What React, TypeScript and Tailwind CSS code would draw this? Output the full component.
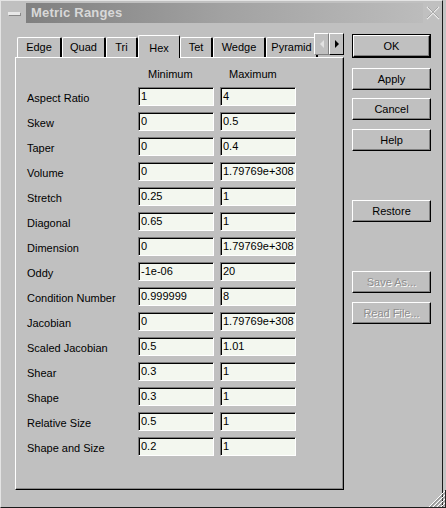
import React from 'react';

const rows: [string, string, string][] = [
  ['Aspect Ratio', '1', '4'],
  ['Skew', '0', '0.5'],
  ['Taper', '0', '0.4'],
  ['Volume', '0', '1.79769e+308'],
  ['Stretch', '0.25', '1'],
  ['Diagonal', '0.65', '1'],
  ['Dimension', '0', '1.79769e+308'],
  ['Oddy', '-1e-06', '20'],
  ['Condition Number', '0.999999', '8'],
  ['Jacobian', '0', '1.79769e+308'],
  ['Scaled Jacobian', '0.5', '1.01'],
  ['Shear', '0.3', '1'],
  ['Shape', '0.3', '1'],
  ['Relative Size', '0.5', '1'],
  ['Shape and Size', '0.2', '1'],
];

const tabs: { name: string; w: string }[] = [
  { name: 'Edge', w: 'w-[45px]' },
  { name: 'Quad', w: 'w-[44px]' },
  { name: 'Tri', w: 'w-[32px]' },
  { name: 'Hex', w: 'w-[42px]' },
  { name: 'Tet', w: 'w-[33px]' },
  { name: 'Wedge', w: 'w-[53px]' },
  { name: 'Pyramid', w: 'w-[52px]' },
];

const Field: React.FC<{ value: string }> = ({ value }) => (
  <div className="h-[19px] flex items-center pl-[2px] bg-[#f3f7ef] border border-t-[#7a7a7a] border-l-[#7a7a7a] border-b-white border-r-white shadow-[inset_1px_1px_0_#000] leading-none whitespace-nowrap overflow-hidden">
    {value}
  </div>
);

const Btn: React.FC<{ label: string; disabled?: boolean; className?: string }> = ({ label, disabled, className = '' }) => (
  <div
    className={`h-[22px] flex items-center justify-center border border-t-white border-l-white border-r-black border-b-black shadow-[inset_-1px_-1px_0_#808080] ${
      disabled ? 'text-[#8e8e8e] [text-shadow:1px_1px_0_#ffffff]' : 'text-black'
    } ${className}`}
  >
    {label}
  </div>
);

export default function App() {
  return (
    <div className="w-[446px] h-[508px] bg-[#c4c4c4] relative overflow-hidden font-['Liberation_Sans',Arial,sans-serif] text-[11px] text-black">
      <div className="w-[443px] h-[508px] bg-[#c0c0c0] border-l border-t border-l-[#e4e4e4] border-t-[#e4e4e4] border-r border-b border-r-[#1a1a1a] border-b-[#1a1a1a] relative">
        {/* title bar */}
        <div className="flex items-center h-[20px] mt-[2px]">
          <div className="w-[25px] flex items-center justify-center">
            <div className="w-[12px] h-[3px] bg-[#e8e8e8] shadow-[1px_1px_0_#888888]" />
          </div>
          <div className="w-[397px] h-[20px] bg-gradient-to-r from-[#808080] via-[#a2a2a2] to-[#bcbcbc] flex items-center pl-[5px]">
            <span className="font-bold text-[13px] text-[#d8d8d8] tracking-[0.2px]">Metric Ranges</span>
          </div>
          <div className="flex-1 flex items-center justify-center">
            <svg width="14" height="14" viewBox="0 0 14 14">
              <path d="M1 1 L13 13 M13 1 L1 13" stroke="#ececec" strokeWidth="1.2" />
              <path d="M2 1 L13 12 M12 1 L1 12" stroke="#8a8a8a" strokeWidth="0.6" />
            </svg>
          </div>
        </div>

        {/* body */}
        <div className="flex mt-[10px]">
          <div className="ml-[14px] w-[329px]">
            {/* tabs */}
            <div className="relative h-[24px] flex items-end pl-[2px]">
              {tabs.map((t) =>
                t.name === 'Hex' ? (
                  <div
                    key={t.name}
                    className={`${t.w} h-[23px] -mb-[1px] relative z-10 bg-[#c0c0c0] border-l border-t border-l-white border-t-white border-r border-r-black rounded-tl-[2px] rounded-tr-[2px] flex items-start justify-center pt-[4px]`}
                  >
                    {t.name}
                  </div>
                ) : (
                  <div
                    key={t.name}
                    className={`${t.w} h-[20px] border-l border-t border-l-white border-t-white border-r-2 border-r-black rounded-tl-[2px] rounded-tr-[2px] flex items-center justify-center pb-[1px]`}
                  >
                    {t.name}
                  </div>
                )
              )}
              <div className="absolute right-0 top-0 h-[22px] flex">
                <div className="w-[15px] h-[22px] bg-[#c0c0c0] border border-t-white border-l-white border-r-[#808080] border-b-[#808080] flex items-center justify-center">
                  <svg width="4" height="8" viewBox="0 0 4 8">
                    <path d="M4 0 L0 4 L4 8 Z" fill="#e2e2e2" />
                  </svg>
                </div>
                <div className="w-[15px] h-[22px] bg-[#c0c0c0] border border-t-white border-l-white border-r-black border-b-black flex items-center justify-center">
                  <svg width="4" height="8" viewBox="0 0 4 8">
                    <path d="M0 0 L4 4 L0 8 Z" fill="#000" />
                  </svg>
                </div>
              </div>
            </div>

            {/* panel */}
            <div className="h-[433px] border-l border-t border-l-white border-t-white border-r border-b border-r-black border-b-black shadow-[inset_-1px_-1px_0_#8a8a8a] pt-[10px] pl-[11px]">
              <div className="grid grid-cols-[105px_76px_76px] gap-x-[6px] gap-y-[6px] items-center">
                <div className="h-[13px]" />
                <div className="h-[13px] pl-[10px] leading-[13px]">Minimum</div>
                <div className="h-[13px] pl-[9px] leading-[13px]">Maximum</div>
                {rows.map(([label, min, max]) => (
                  <React.Fragment key={label}>
                    <div className="h-[19px] flex items-center pt-[3px] whitespace-nowrap">{label}</div>
                    <Field value={min} />
                    <Field value={max} />
                  </React.Fragment>
                ))}
              </div>
            </div>
          </div>

          {/* buttons */}
          <div className="ml-[8px] mt-[1px] w-[79px] flex flex-col">
            <div className="border border-black">
              <Btn label="OK" />
            </div>
            <Btn label="Apply" className="mt-[10px]" />
            <Btn label="Cancel" className="mt-[8px]" />
            <Btn label="Help" className="mt-[9px]" />
            <Btn label="Restore" className="mt-[49px]" />
            <Btn label="Save As..." disabled className="mt-[49px]" />
            <Btn label="Read File..." disabled className="mt-[9px]" />
          </div>
        </div>
      </div>

      {/* resize grip */}
      <svg className="absolute right-0 bottom-0" width="18" height="18" viewBox="0 0 18 18">
        <path d="M17 1 L1 17 M17 5 L5 17 M17 9 L9 17 M17 13 L13 17" stroke="#ffffff" strokeWidth="1" />
        <path d="M17 2.5 L2.5 17 M17 6.5 L6.5 17 M17 10.5 L10.5 17 M17 14.5 L14.5 17" stroke="#777777" strokeWidth="1" />
        <path d="M17.5 0 L17.5 18 M0 17.5 L18 17.5" stroke="#222222" strokeWidth="1" />
      </svg>
    </div>
  );
}
